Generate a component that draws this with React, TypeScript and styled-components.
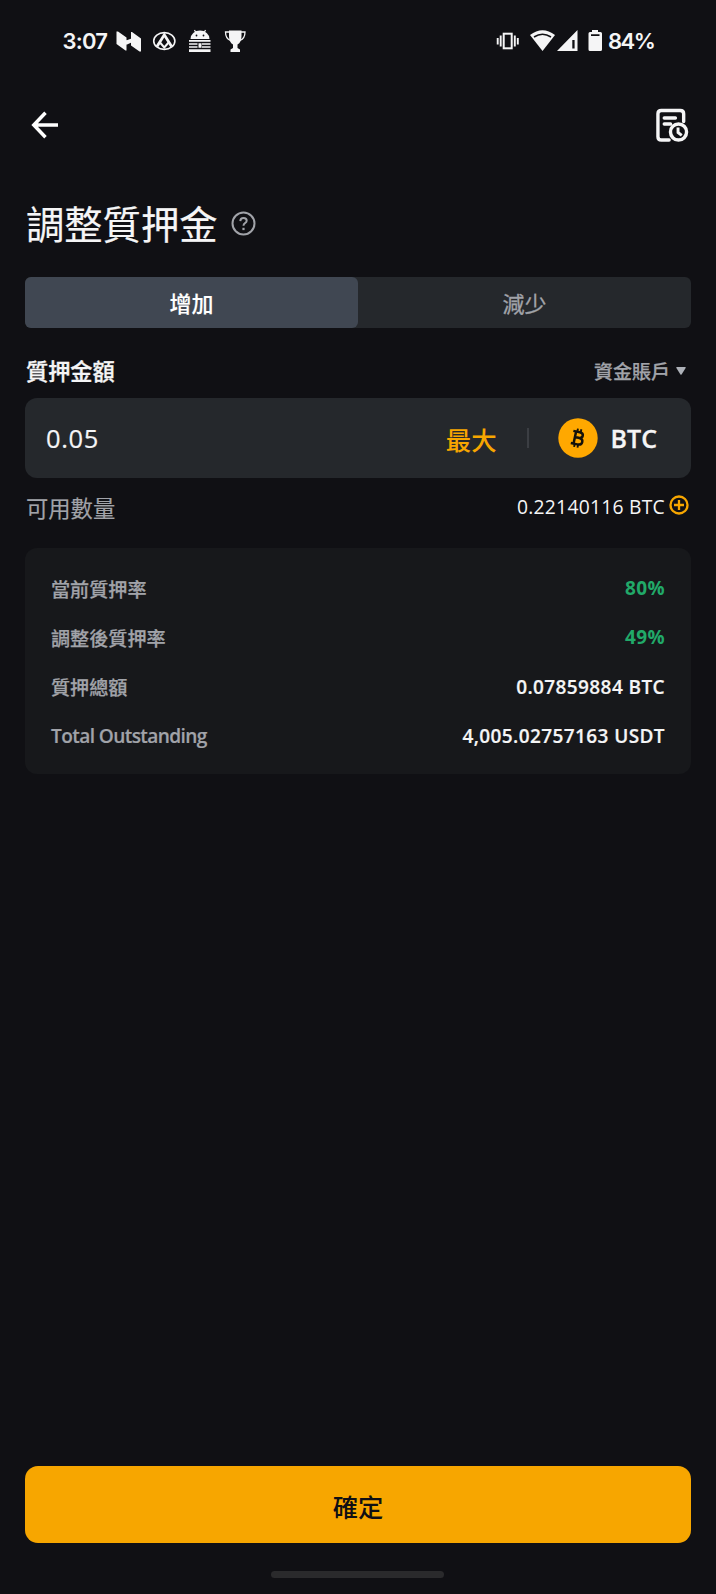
import React from "react";
import styled, { createGlobalStyle } from "styled-components";

const cjk = `"Noto Sans CJK TC", "Noto Sans CJK SC", sans-serif`;
const latin = `"Open Sans", "Noto Sans", "Noto Sans CJK TC", sans-serif`;
const color = {
  bg: "#101014",
  field: "#25282c",
  active: "#404752",
  card: "#17181b",
  text: "#f5f5f6",
  muted: "#a1a3a9",
  orange: "#f7a600",
  green: "#21a969",
};

const GlobalStyle = createGlobalStyle`
  * { box-sizing: border-box; }
  body { margin: 0; background: ${color.bg}; }
  button { border: 0; padding: 0; background: none; color: inherit; font: inherit; }
  svg { display: block; flex: none; }
`;

const Screen = styled.div`
  display: flex;
  flex-direction: column;
  width: 716px;
  height: 1594px;
  padding: 0 25px;
  background: ${color.bg};
  color: ${color.text};
  font-family: ${cjk};
`;

const StatusBar = styled.header`
  display: flex;
  align-items: center;
  justify-content: space-between;
  height: 82px;
  padding: 0 38px 0 37.5px;
`;

const StatusGroup = styled.div`
  display: flex;
  align-items: center;
`;

const StatusText = styled.span<{ $width: number; $spacing: number }>`
  width: ${(p) => p.$width}px;
  font: 600 22px/30px Inter, sans-serif;
  letter-spacing: ${(p) => p.$spacing}px;
  white-space: nowrap;
`;

const NavBar = styled.nav`
  display: flex;
  align-items: center;
  justify-content: space-between;
  height: 86px;
  padding: 0 2px 0 6px;
`;

const TitleRow = styled.div`
  display: flex;
  align-items: center;
  gap: 13px;
  height: 109px;
  padding: 1px 0 0 1px;
`;

const Title = styled.h1`
  margin: 0;
  font-size: 38.3px;
  font-weight: 400;
  line-height: 60px;
  -webkit-text-stroke: 0.2px;
`;

const Tabs = styled.div`
  display: flex;
  height: 51px;
  border-radius: 6px;
  background: ${color.field};
`;

const Tab = styled.button<{ $active?: boolean }>`
  flex: 1;
  padding-bottom: 2px;
  border-radius: 6px;
  background: ${(p) => (p.$active ? color.active : "transparent")};
  color: ${(p) => (p.$active ? "#fff" : color.muted)};
  font: ${(p) => (p.$active ? 500 : 400)} 22px/48px ${cjk};
  -webkit-text-stroke: ${(p) => (p.$active ? 0.15 : 0.3)}px;
`;

const FieldHeader = styled.div`
  display: flex;
  align-items: center;
  justify-content: space-between;
  height: 70px;
  padding: 14px 5px 0 1px;
`;

const FieldLabel = styled.label`
  font-size: 22.2px;
  font-weight: 500;
  line-height: 32px;
  -webkit-text-stroke: 0.35px;
`;

const AccountPicker = styled.button`
  display: flex;
  align-items: center;
  gap: 6px;
  padding-top: 1px;
  color: ${color.muted};
  font: 500 19px/32px ${cjk};
  -webkit-text-stroke: 0.25px;
`;

const AmountField = styled.div`
  display: flex;
  align-items: center;
  height: 80px;
  padding: 0 34px 0 21px;
  border-radius: 12px;
  background: ${color.field};
`;

const Amount = styled.span`
  flex: 1;
  font: 500 25.5px/36px ${latin};
  letter-spacing: 0.6px;
  -webkit-text-stroke: 0.2px;
`;

const MaxButton = styled.button`
  padding-top: 2px;
  color: ${color.orange};
  font: 500 25.4px/36px ${cjk};
`;

const Divider = styled.span`
  width: 2px;
  height: 20px;
  margin: 0 29px 0 30px;
  background: #3b3e43;
`;

const Coin = styled.span`
  margin-left: 13px;
  font: 600 25px/36px ${latin};
  -webkit-text-stroke: 0.3px;
`;

const AvailableRow = styled.div`
  display: flex;
  align-items: center;
  justify-content: space-between;
  height: 70px;
  padding: 0 2px 13px 1px;
`;

const AvailableLabel = styled.span`
  color: ${color.muted};
  font-size: 22.3px;
  line-height: 32px;
  -webkit-text-stroke: 0.2px;
`;

const Available = styled.span`
  display: flex;
  align-items: center;
  gap: 4px;
  font: 500 19.3px/30px ${latin};
  letter-spacing: 0.25px;
`;

const Card = styled.dl`
  display: flex;
  flex-direction: column;
  height: 225.5px;
  margin: 0;
  padding: 15.5px 26px 0;
  border-radius: 12px;
  background: ${color.card};
`;

const CardRow = styled.div`
  display: flex;
  align-items: center;
  justify-content: space-between;
  height: 49.3px;
`;

const CardLabel = styled.dt<{ $latin?: boolean }>`
  padding-top: ${(p) => (p.$latin ? 0 : 1)}px;
  color: ${color.muted};
  font: ${(p) => (p.$latin ? 600 : 500)} 19.1px/30px ${(p) => (p.$latin ? latin : cjk)};
  letter-spacing: ${(p) => (p.$latin ? -0.6 : 0)}px;
  -webkit-text-stroke: ${(p) => (p.$latin ? 0.2 : 0.25)}px;
`;

const CardValue = styled.dd<{ $good?: boolean }>`
  margin: 0;
  color: ${(p) => (p.$good ? color.green : color.text)};
  font: ${(p) => (p.$good ? 700 : 600)} 19px/30px ${latin};
  letter-spacing: 0.4px;
  -webkit-text-stroke: ${(p) => (p.$good ? 0 : 0.2)}px;
`;

const Footer = styled.footer`
  display: flex;
  flex-direction: column;
  align-items: center;
  gap: 28px;
  margin-top: auto;
  padding-bottom: 16px;
`;

const Confirm = styled.button`
  width: 100%;
  height: 77px;
  padding-top: 3px;
  border-radius: 13px;
  background: ${color.orange};
  color: #101014;
  font: 500 25.3px/74px ${cjk};
`;

const HomeBar = styled.span`
  width: 173px;
  height: 7px;
  margin-right: 1px;
  border-radius: 3.5px;
  background: #2a2a2c;
`;

const NotificationIcons = () => (
  <svg width="132" height="24" viewBox="115 29 132 24" fill="#f5f5f6">
    <path d="M116.500 31.500H118L126.500 37.500V50.500H125.500L116.500 44ZM131 32H132L141 38.500V51.500H139.500L131 45.500ZM126 40.500 131.500 38.500V42.500L126 45Z" />
    <g fill="none" stroke="#f5f5f6">
      <ellipse cx="164.300" cy="41" rx="10.600" ry="8.400" strokeWidth="1.600" />
      <path d="M157 46.500 164.300 34.800 171.600 46.500" strokeWidth="2.800" />
      <path d="m160 42.500 4.300 5 4.300-5" strokeWidth="2" />
    </g>
    <path d="M190.500 39a9.500 8.500 0 0 1 19 0Z" />
    <path d="m194.500 30 1.500 3M205.500 30l-1.500 3" stroke="#f5f5f6" strokeWidth="1.200" />
    <circle cx="196.500" cy="35.500" r=".9" fill="#101014" />
    <circle cx="203.500" cy="35.500" r=".9" fill="#101014" />
    <path d="M189 40h21.500v1.800H189ZM189 43.200h8.500v1.500H189ZM202 43.200h8.500v1.500H202ZM198.500 43.200h3v4.600h-3ZM189 46.300h8.500v1.500H189ZM202 46.300h8.500v1.500H202ZM189 49.300h21.500V52H189Z" />
    <path d="M229 30.500h12.500v5.500q0 6.500-4 8.500v3.500l2.500 1.500v2.500h-9.500v-2.500l2.500-1.500V44.500q-4-2-4-8.500Z" />
    <path d="M229.500 32h-4q0 6.500 5 8.500M241 32h4q0 6.500-5 8.500" fill="none" stroke="#f5f5f6" strokeWidth="1.300" />
  </svg>
);

const SystemIcons = () => (
  <svg width="113" height="24" viewBox="495 29 113 24" fill="#f5f5f6">
    <rect x="503.700" y="33.700" width="8" height="14.600" fill="none" stroke="#f5f5f6" strokeWidth="2" />
    <path d="M500.700 35.500v11M514.800 35.500v11M497.700 38v6.500M517.800 38v6.500" stroke="#f5f5f6" strokeWidth="1.900" />
    <path d="M530 35Q542.500 25.500 555 35L542.500 51Z" />
    <path d="M534 37Q542.500 31.500 551 37" fill="none" stroke="#101014" strokeWidth="1.500" />
    <path fillRule="evenodd" d="M577.500 30v21H557ZM572.300 40v8.500h2.300V40Z" />
    <path fillRule="evenodd" d="M592 30h6v2h2.500q1.500 0 1.500 1.500v16q0 1.500-1.500 1.500h-10.500q-1.500 0-1.500-1.500v-16q0-1.500 1.500-1.500h2ZM591 34.300v1.600h8.500v-1.600Z" />
  </svg>
);

const BackIcon = () => (
  <svg width="28" height="28" viewBox="0 0 28 28" fill="none" stroke="#fff" strokeWidth="3.500">
    <path d="M14.500 1.800 2.800 14l11.700 12.200M3 14h24" />
  </svg>
);

const OrdersIcon = () => (
  <svg width="33" height="35" viewBox="0 0 34 35" fill="none" stroke="#f5f5f6" strokeWidth="3.500">
    <path d="M13.500 32.500H5.500q-3.500 0-3.500-3.500V5.500Q2 2 5.500 2H25q3.500 0 3.500 3.500v8" strokeLinecap="round" />
    <path d="M8.500 9.800h11.500M8.500 16h6.500" strokeLinecap="round" />
    <circle cx="23.200" cy="24.200" r="8.300" />
    <path d="M22.700 19.500v5.200l3.800 3" strokeWidth="3" />
  </svg>
);

const HelpIcon = () => (
  <svg width="25" height="25" viewBox="0 0 25 25" fill="none" stroke="#a1a3a9" strokeWidth="2">
    <circle cx="12.500" cy="12.500" r="11" />
    <path d="M9.300 10.100q.1-3 3.200-3 3.200 0 3.200 2.700 0 1.500-1.700 2.400-1.500.8-1.500 2.500" />
    <path d="M12.500 16.800v2.300" strokeWidth="2.200" />
  </svg>
);

const CaretIcon = () => (
  <svg width="10" height="8" viewBox="0 0 10 8" fill="#adb1b8">
    <path d="M.8 0h8.400q1 0 .4 1L5.700 7.300q-.7 1-1.400 0L.4 1Q-.2 0 .8 0Z" />
  </svg>
);

const BitcoinIcon = () => (
  <svg width="40" height="40" viewBox="0 0 40 40">
    <circle cx="20" cy="20" r="19.700" fill="#ffa800" />
    <g transform="rotate(12 20 20)" fill="none" stroke="#15110a" strokeWidth="2.500">
      <path d="M14 14h6.500q3.700 0 3.700 2.900 0 2.800-3.700 2.800h-4M20.500 19.700q4.500 0 4.500 3.300 0 3.400-4.500 3.400H14M16.800 14v12.400" />
      <path d="M18 10.800v3M21.500 10.800v3M18 26.500v3M21.500 26.500v3" strokeWidth="1.900" />
    </g>
  </svg>
);

const AddGlyph = styled.svg`
  margin-bottom: 3px;
`;

const AddIcon = () => (
  <AddGlyph width="20" height="20" viewBox="0 0 20 20" fill="none" stroke="#f7a600" strokeWidth="2.300">
    <circle cx="10" cy="10" r="8.500" />
    <path d="M10 5v10M5 10h10" />
  </AddGlyph>
);

const rows = [
  { label: "當前質押率", value: "80%", good: true },
  { label: "調整後質押率", value: "49%", good: true },
  { label: "質押總額", value: "0.07859884 BTC" },
  { label: "Total Outstanding", value: "4,005.02757163 USDT", latin: true },
];

export default function App() {
  return (
    <Screen>
      <GlobalStyle />
      <StatusBar>
        <StatusGroup>
          <StatusText $width={52.5} $spacing={-0.8}>3:07</StatusText>
          <NotificationIcons />
        </StatusGroup>
        <StatusGroup>
          <SystemIcons />
          <StatusText $width={45} $spacing={-1.5}>84%</StatusText>
        </StatusGroup>
      </StatusBar>
      <NavBar>
        <BackIcon />
        <OrdersIcon />
      </NavBar>
      <TitleRow>
        <Title>調整質押金</Title>
        <HelpIcon />
      </TitleRow>
      <Tabs>
        <Tab $active>增加</Tab>
        <Tab>減少</Tab>
      </Tabs>
      <FieldHeader>
        <FieldLabel>質押金額</FieldLabel>
        <AccountPicker>
          資金賬戶
          <CaretIcon />
        </AccountPicker>
      </FieldHeader>
      <AmountField>
        <Amount>0.05</Amount>
        <MaxButton>最大</MaxButton>
        <Divider />
        <BitcoinIcon />
        <Coin>BTC</Coin>
      </AmountField>
      <AvailableRow>
        <AvailableLabel>可用數量</AvailableLabel>
        <Available>
          0.22140116 BTC
          <AddIcon />
        </Available>
      </AvailableRow>
      <Card>
        {rows.map((row) => (
          <CardRow key={row.label}>
            <CardLabel $latin={row.latin}>{row.label}</CardLabel>
            <CardValue $good={row.good}>{row.value}</CardValue>
          </CardRow>
        ))}
      </Card>
      <Footer>
        <Confirm>確定</Confirm>
        <HomeBar />
      </Footer>
    </Screen>
  );
}
